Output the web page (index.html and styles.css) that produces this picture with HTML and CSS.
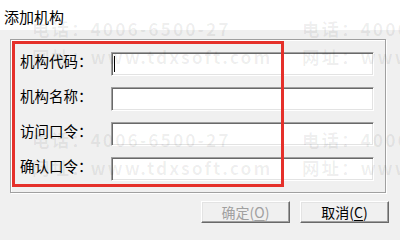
FILE: index.html
```html
<!DOCTYPE html>
<html lang="zh-CN">
<head>
<meta charset="utf-8">
<title>添加机构</title>
<link rel="stylesheet" href="styles.css">
</head>
<body>
  <div class="title">添加机构</div>
  <div class="panel">
    <div class="group">
      <div class="label">机构代码：</div>
      <div class="field"><span class="caret"></span></div>
      <div class="label">机构名称：</div>
      <div class="field"></div>
      <div class="label">访问口令：</div>
      <div class="field"></div>
      <div class="label">确认口令：</div>
      <div class="field"></div>
    </div>
    <div class="buttons">
      <div class="btn disabled">确定(<u>O</u>)</div>
      <div class="btn">取消(<u>C</u>)</div>
    </div>
  </div>
  <div class="highlight"></div>
  <div class="watermark">
    <div class="tile"><div>电话：4006-6500-27</div><div>网址：www.tdxsoft.com</div></div>
    <div class="tile"><div>电话：4006-6500-27</div><div>网址：www.tdxsoft.com</div></div>
    <div class="tile"><div>电话：4006-6500-27</div><div>网址：www.tdxsoft.com</div></div>
    <div class="tile"><div>电话：4006-6500-27</div><div>网址：www.tdxsoft.com</div></div>
  </div>
</body>
</html>
```

FILE: styles.css
```css
html, body {
  margin: 0;
  padding: 0;
}
body {
  width: 400px;
  height: 240px;
  position: relative;
  overflow: hidden;
  background: #f0f0f0;
  font-family: "Noto Sans CJK SC", "Liberation Sans", sans-serif;
  color: #000;
}
.title {
  height: 30px;
  box-sizing: border-box;
  padding: 6px 0 0 4px;
  font-size: 15px;
  line-height: 21px;
  background: #fff;
}
.panel {
  padding: 9px 11px 0 10px;
  display: flex;
  flex-direction: column;
}
.group {
  width: 376px;
  height: 154px;
  box-sizing: border-box;
  border: 1px solid #a0a0a0;
  box-shadow: inset 1px 1px #fff, 1px 1px #fff;
  padding: 12px 0 0 9px;
  display: grid;
  grid-template-columns: 91px 263px;
  grid-auto-rows: 24px;
  row-gap: 11px;
}
.label {
  align-self: start;
  font-size: 14.5px;
  line-height: 18px;
  white-space: nowrap;
}
.field {
  box-sizing: border-box;
  background: #fff;
  border: 1px solid;
  border-color: #a0a0a0 #fff #fff #a0a0a0;
  box-shadow: inset 1px 1px #696969, inset -1px -1px #e3e3e3;
  padding: 3px 0 0 2px;
}
.caret {
  display: block;
  width: 1px;
  height: 16px;
  background: #000;
}
.buttons {
  margin-top: 8px;
  display: flex;
  justify-content: flex-end;
  gap: 10px;
}
.btn {
  width: 89px;
  height: 22px;
  box-sizing: border-box;
  border: 1px solid;
  border-color: #fff #696969 #696969 #fff;
  box-shadow: inset -1px -1px #a0a0a0, inset 1px 1px #e3e3e3;
  background: #f0f0f0;
  font-size: 14px;
  line-height: 20px;
  text-align: center;
}
.btn.disabled {
  color: #a0a0a0;
}
.btn u {
  text-underline-offset: 2px;
}
.highlight {
  position: absolute;
  left: 12px;
  top: 41px;
  width: 272px;
  height: 146px;
  box-sizing: border-box;
  border: 3px solid #e5302a;
}
.watermark {
  position: absolute;
  inset: 0;
  pointer-events: none;
  overflow: hidden;
  display: grid;
  grid-template-columns: repeat(2, 270px);
  grid-auto-rows: 111px;
  padding: 15px 0 0 32px;
  font-weight: bold;
  font-size: 17.5px;
  line-height: 28px;
  letter-spacing: 2px;
  color: rgba(0, 0, 0, 0.065);
  white-space: nowrap;
}
```
